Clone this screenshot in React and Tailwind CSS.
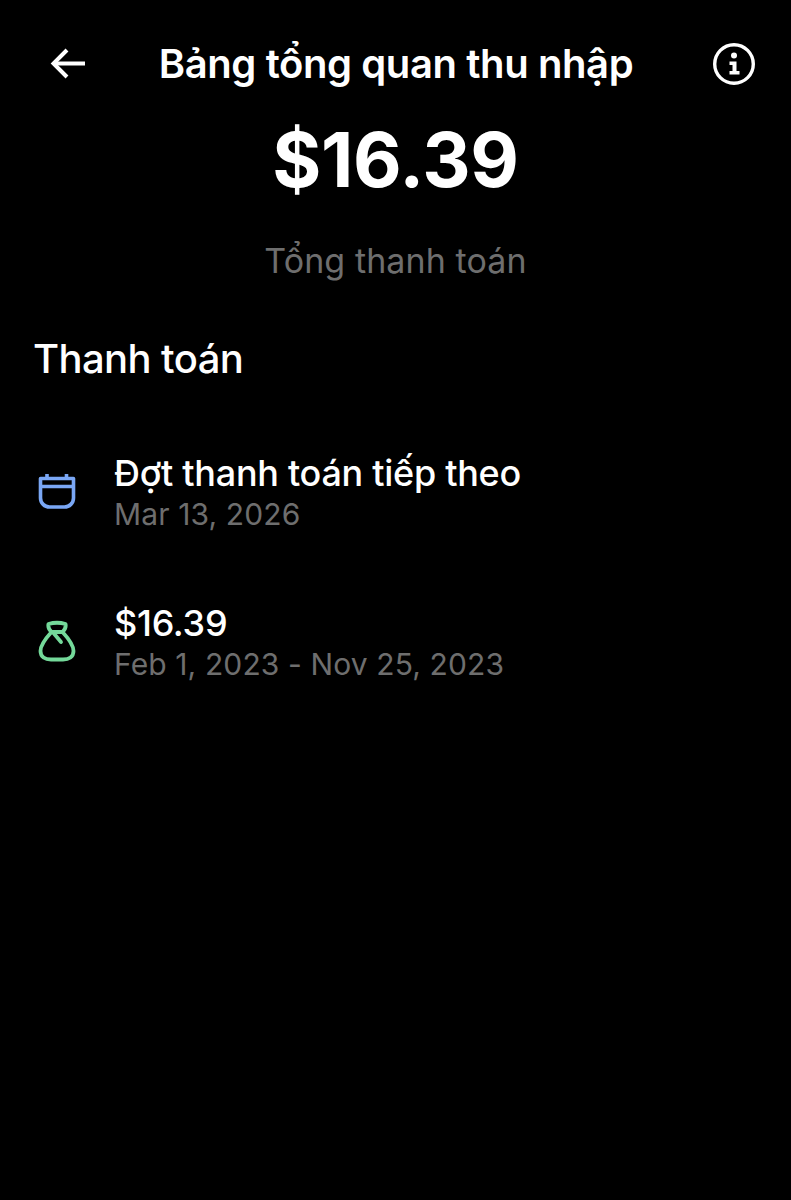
const font = { fontFamily: 'Inter, "Noto Sans", sans-serif' };

function BackIcon() {
  return (
    <svg width="36" height="32" viewBox="0 0 36 32" fill="none" stroke="#fff" strokeWidth="4">
      <path d="M35 15.500H4" />
      <path d="M17 2L3.500 15.500L17 29" />
    </svg>
  );
}

function InfoIcon() {
  return (
    <svg width="42" height="42" viewBox="0 0 42 42" fill="none">
      <circle cx="21" cy="21" r="19.3" stroke="#fff" strokeWidth="3.4" />
      <circle cx="21" cy="12.500" r="3" fill="#fff" />
      <path d="M16.500 18.500H23.500V28H26.500V31.500H16.500V28H19.500V22H16.500Z" fill="#fff" />
    </svg>
  );
}

function CalendarIcon() {
  return (
    <svg width="38" height="38" viewBox="0 0 38 38" fill="none" stroke="#7aa7f5" strokeWidth="3.600">
      <path d="M2.500 6.500H35.500V26a9 9 0 0 1-9 9H11.500a9 9 0 0 1-9-9Z" strokeLinejoin="round" />
      <path d="M2.500 14.500H35.500" />
      <path d="M9 2V6M28.500 2V6" />
    </svg>
  );
}

function BagIcon() {
  return (
    <svg width="38" height="42" viewBox="0 0 38 42" fill="none" stroke="#74d99a" strokeWidth="3.800" strokeLinecap="round" strokeLinejoin="round">
      <path d="M10.500 4Q19 1.500 27.500 4Q28.500 8 24.500 12H13.500Q9.500 8 10.500 4Z" />
      <path d="M13.500 12C8 18 2.500 25 2.500 31C2.500 37 7 39.500 13 39.500H25C31 39.500 35.500 37 35.500 31C35.500 25 30 18 24.500 12" />
      <path d="M15.500 13L23 22" />
    </svg>
  );
}

function PayoutRow({ icon, title, sub }) {
  return (
    <div className="flex items-center">
      <div className="w-[114px] pl-[38px] shrink-0 flex items-center mb-[6px]">{icon}</div>
      <div>
        <p className="text-[36px] leading-[40px] font-medium tracking-[-0.28px] text-white">{title}</p>
        <p className="text-[30px] leading-[42px] text-[#6e6e6e] tracking-[0.12px]">{sub}</p>
      </div>
    </div>
  );
}

export default function App() {
  return (
    <div className="min-h-[1200px] bg-black text-white" style={font}>
      {/* Header */}
      <header className="flex items-center justify-between pt-[40px] pl-[50px] pr-[36px]">
        <BackIcon />
        <h1 className="mr-[7px] text-[40px] leading-[48px] font-semibold tracking-[-0.4px]">Bảng tổng quan thu nhập</h1>
        <InfoIcon />
      </header>

      <div className="flex flex-col items-center">
        <p className="mt-[32px] text-[75px] leading-[80px] font-bold tracking-[-0.3px]">$16.39</p>
        <p className="mt-[41px] text-[34px] leading-[40px] tracking-[0.1px] text-[#6e6e6e]">Tổng thanh toán</p>
      </div>

      <h2 className="mt-[56px] pl-[33px] text-[40px] leading-[44px] font-medium tracking-[-0.6px]">Thanh toán</h2>

      <div className="mt-[72px] flex flex-col gap-[68px]">
        <PayoutRow icon={<CalendarIcon />} title="Đợt thanh toán tiếp theo" sub="Mar 13, 2026" />
        <PayoutRow icon={<BagIcon />} title="$16.39" sub="Feb 1, 2023 - Nov 25, 2023" />
      </div>
    </div>
  );
}
